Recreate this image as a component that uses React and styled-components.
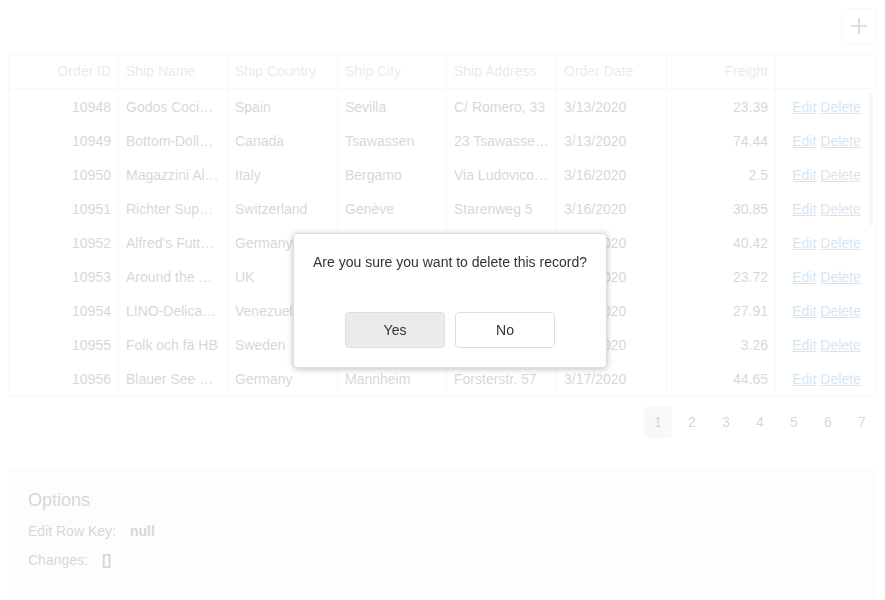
import React from 'react'
import styled, { createGlobalStyle } from 'styled-components'

const GlobalStyle = createGlobalStyle`
  body {
    margin: 8px;
    font-family: "Liberation Sans", Arial, sans-serif;
    font-size: 14px;
    color: #333;
    background: #fff;
  }
`

const columns = [
  { key: 'id', title: 'Order ID', align: 'right' },
  { key: 'name', title: 'Ship Name' },
  { key: 'country', title: 'Ship Country' },
  { key: 'city', title: 'Ship City' },
  { key: 'address', title: 'Ship Address' },
  { key: 'date', title: 'Order Date' },
  { key: 'freight', title: 'Freight', align: 'right' },
]

const orders = [
  [10948, 'Godos Cocina Típica', 'Spain', 'Sevilla', 'C/ Romero, 33', '3/13/2020', '23.39'],
  [10949, 'Bottom-Dollar Markets', 'Canada', 'Tsawassen', '23 Tsawassen Blvd.', '3/13/2020', '74.44'],
  [10950, 'Magazzini Alimentari Riuniti', 'Italy', 'Bergamo', 'Via Ludovico il Moro 22', '3/16/2020', '2.5'],
  [10951, 'Richter Supermarkt', 'Switzerland', 'Genève', 'Starenweg 5', '3/16/2020', '30.85'],
  [10952, "Alfred's Futterkiste", 'Germany', 'Berlin', 'Obere Str. 57', '3/16/2020', '40.42'],
  [10953, 'Around the Horn', 'UK', 'London', 'Brook Farm Stratford St. Mary', '3/16/2020', '23.72'],
  [10954, 'LINO-Delicateses', 'Venezuela', 'I. de Margarita', 'Ave. 5 de Mayo Porlamar', '3/17/2020', '27.91'],
  [10955, 'Folk och fä HB', 'Sweden', 'Bräcke', 'Åkergatan 24', '3/17/2020', '3.26'],
  [10956, 'Blauer See Delikatessen', 'Germany', 'Mannheim', 'Forsterstr. 57', '3/17/2020', '44.65'],
]

const GRID = '110px 109px 110px 109px 110px 110px 109px 102px'

const Page = styled.div`
  position: relative;
`
const Toolbar = styled.div`
  display: flex;
  justify-content: flex-end;
  padding-bottom: 10px;
`
const IconButton = styled.div`
  width: 34px;
  height: 34px;
  border: 1px solid #ddd;
  border-radius: 4px;
  display: flex;
  align-items: center;
  justify-content: center;
  color: #333;
`
const Table = styled.div`
  border: 1px solid #ddd;
  position: relative;
`
const HeaderRow = styled.div`
  display: grid;
  grid-template-columns: ${GRID};
  border-bottom: 1px solid #ddd;
  margin-left: -1px;
`
const Row = styled.div`
  display: grid;
  grid-template-columns: ${GRID};
  margin-left: -1px;
`
const Cell = styled.div`
  height: ${p => (p.$head ? 33 : 34)}px;
  line-height: ${p => (p.$head ? 32 : 34)}px;
  padding: 0 7px;
  border-left: 1px solid #ddd;
  text-align: ${p => p.$align || 'left'};
  color: ${p => (p.$head ? '#959595' : '#333')};
  white-space: nowrap;
  overflow: hidden;
  text-overflow: ellipsis;
  &:first-child {
    border-left-color: transparent;
  }
`
const Body = styled.div`
  padding-top: 1px;
`
const Link = styled.a`
  color: #337ab7;
  text-decoration: underline;
  margin: 0 2px;
`
const ScrollThumb = styled.div`
  position: absolute;
  right: 3px;
  top: 37px;
  width: 4px;
  height: 134px;
  background: #bfbfbf;
  opacity: 0.6;
`
const Pager = styled.div`
  display: flex;
  justify-content: flex-end;
  gap: 6px;
  padding-top: 9px;
`
const PageItem = styled.div`
  width: 28px;
  height: 32px;
  line-height: 32px;
  text-align: center;
  border-radius: 4px;
  background: ${p => (p.$active ? '#dcdcdc' : 'transparent')};
  color: #333;
  &:last-child {
    margin-right: 1px;
  }
`
const Options = styled.div`
  margin-top: 30px;
  background: #f5f5f5;
  padding: 20px 20px 40px;
  height: 160px;
`
const OptionsTitle = styled.div`
  font-size: 18px;
  font-weight: 400;
  line-height: 24px;
  margin-bottom: 11px;
`
const Option = styled.div`
  display: flex;
  align-items: center;
  line-height: 16px;
  margin-bottom: 13px;
  gap: ${p => p.$gap}px;
`
const OptionValue = styled.span`
  font-weight: bold;
`
const Shader = styled.div`
  position: fixed;
  inset: 0;
  background: rgba(255, 255, 255, 0.8);
`
const Dialog = styled.div`
  position: fixed;
  left: 293px;
  top: 233px;
  width: 314px;
  height: 135px;
  box-sizing: border-box;
  background: #fff;
  border: 1px solid #ddd;
  border-radius: 4px;
  box-shadow: 0 1px 6px rgba(0, 0, 0, 0.25);
  padding: 20px 0 0;
  display: flex;
  flex-direction: column;
  align-items: center;
`
const Message = styled.div`
  line-height: 17px;
  white-space: nowrap;
  color: #333;
`
const Buttons = styled.div`
  display: flex;
  gap: 10px;
  margin-top: 41px;
`
const Button = styled.div`
  width: 98px;
  height: 34px;
  line-height: 34px;
  text-align: center;
  border: 1px solid #ddd;
  border-radius: 4px;
  background: ${p => (p.$focused ? '#ebebeb' : '#fff')};
  color: #333;
`

const PlusIcon = () => (
  <svg width="18" height="18" viewBox="0 0 18 18">
    <path d="M9 1v16M1 9h16" stroke="#333" strokeWidth="1.6" fill="none" />
  </svg>
)

export default function App() {
  return (
    <Page>
      <GlobalStyle />
      <Toolbar>
        <IconButton>
          <PlusIcon />
        </IconButton>
      </Toolbar>
      <Table>
        <HeaderRow>
          {columns.map(c => (
            <Cell key={c.key} $head $align={c.align}>{c.title}</Cell>
          ))}
          <Cell $head />
        </HeaderRow>
        <Body>
          {orders.map(o => (
            <Row key={o[0]}>
              {o.map((v, i) => (
                <Cell key={i} $align={columns[i].align}>{v}</Cell>
              ))}
              <Cell $align="center">
                <Link>Edit</Link>
                <Link>Delete</Link>
              </Cell>
            </Row>
          ))}
        </Body>
        <ScrollThumb />
      </Table>
      <Pager>
        {[1, 2, 3, 4, 5, 6, 7].map(n => (
          <PageItem key={n} $active={n === 1}>{n}</PageItem>
        ))}
      </Pager>
      <Options>
        <OptionsTitle>Options</OptionsTitle>
        <Option $gap={14}>
          <span>Edit Row Key:</span>
          <OptionValue>null</OptionValue>
        </Option>
        <Option $gap={14}>
          <span>Changes:</span>
          <OptionValue>[]</OptionValue>
        </Option>
      </Options>
      <Shader />
      <Dialog>
        <Message>Are you sure you want to delete this record?</Message>
        <Buttons>
          <Button $focused>Yes</Button>
          <Button>No</Button>
        </Buttons>
      </Dialog>
    </Page>
  )
}
